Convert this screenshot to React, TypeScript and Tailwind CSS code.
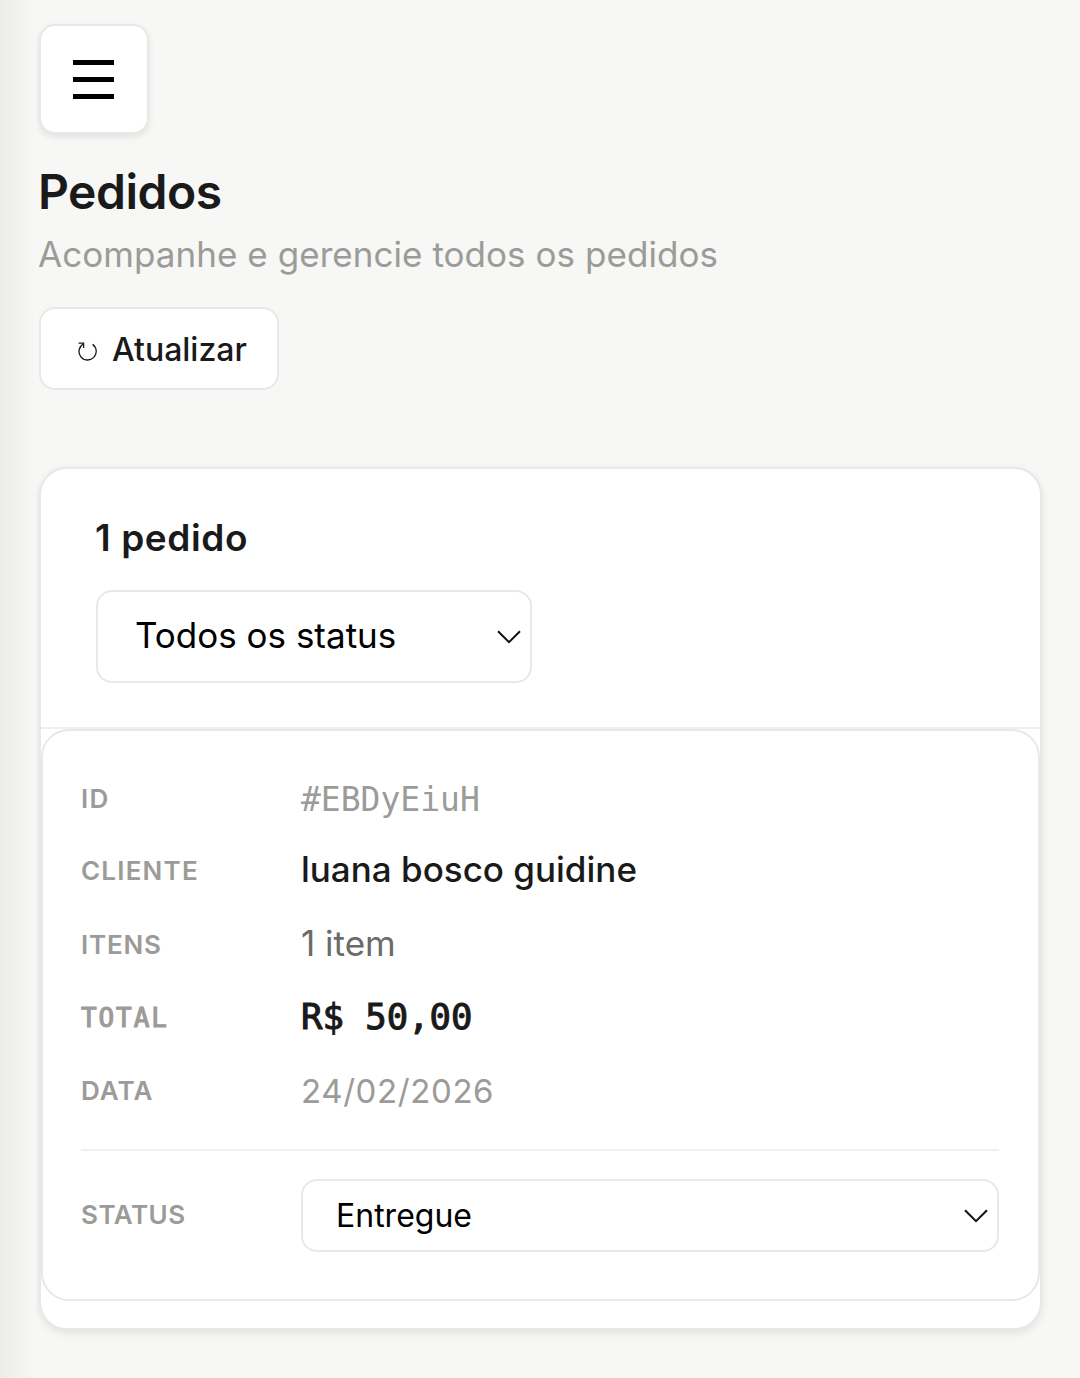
import type { ReactNode } from 'react';

const order = {
  id: '#EBDyEiuH',
  customer: 'luana bosco guidine',
  items: '1 item',
  total: 'R$ 50,00',
  date: '24/02/2026',
  status: 'Entregue',
};

interface RowProps {
  label: string;
  className: string;
  labelClassName: string;
  children: ReactNode;
}

function Chevron() {
  return (
    <svg className="h-[14px] w-6 shrink-0" viewBox="0 0 24 14" fill="none" stroke="#111" strokeWidth="2">
      <path d="M1 1.2 12 12.2 23 1.2" />
    </svg>
  );
}

function RefreshIcon() {
  return (
    <svg className="mt-1 h-5 w-5 shrink-0" viewBox="0 0 20 20" fill="none" stroke="#1a1a1a" strokeWidth="1.3">
      <path d="M5.6 2.8A8.6 8.6 0 1 0 14.6 3.4" />
      <path d="M.6 2.1H5.6V7" />
    </svg>
  );
}

function Row({ label, className, labelClassName, children }: RowProps) {
  return (
    <div className={`flex items-center ${className}`}>
      <span className={`w-[220px] shrink-0 text-[26px] text-[#9b9b98] ${labelClassName}`}>{label}</span>
      {children}
    </div>
  );
}

export default function App() {
  return (
    <div className="relative h-[1378px] w-[1080px] overflow-hidden bg-[#f7f7f5] pt-6 pr-[38px] pl-[39px] font-['Inter','Liberation_Sans',sans-serif] text-[#1a1a1a]">
      {/* sombra do menu lateral fechado */}
      <div className="pointer-events-none absolute inset-y-0 left-0 w-9 bg-linear-to-r from-[#ececea] to-[#f7f7f5]" />

      <button className="flex h-[110px] w-[110px] flex-col items-center justify-center gap-[12px] rounded-2xl border-2 border-[#e8e8e6] bg-white pt-px pr-[2px] shadow-[0_3px_7px_rgba(0,0,0,0.09)]">
        <span className="h-[5px] w-[41px] bg-black" />
        <span className="h-[5px] w-[41px] bg-black" />
        <span className="h-[5px] w-[41px] bg-black" />
      </button>

      <header className="flex flex-col items-start">
        <h1 className="-ml-px mt-[28px] h-[60px] text-[48px] leading-[60px] font-semibold tracking-[-0.5px] whitespace-nowrap">Pedidos</h1>
        <p className="mt-[8px] -ml-px h-[48px] text-[35px] leading-[48px] tracking-[0.05px] whitespace-nowrap text-[#9b9b98]">
          Acompanhe e gerencie todos os pedidos
        </p>
        <button className="mt-[29px] flex h-[83px] w-[240px] items-center gap-[14px] rounded-2xl border-2 border-[#e8e8e6] bg-white pl-[37px] text-[32px] font-medium whitespace-nowrap">
          <RefreshIcon />
          <span className="pt-[2px]">Atualizar</span>
        </button>
      </header>

      <section className="mt-[77px] h-[863px] rounded-[28px] border-2 border-[#e8e8e6] bg-white shadow-[0_3px_8px_rgba(0,0,0,0.09)]">
        <div className="h-[260px] border-b-2 border-[#efefed] px-[55px] pt-[44px]">
          <h2 className="-ml-px h-[50px] text-[37px] leading-[50px] font-semibold tracking-[0.6px] whitespace-nowrap">1 pedido</h2>
          <button className="mt-[27px] flex h-[93px] w-[436px] items-center justify-between rounded-2xl border-2 border-[#e8e8e6] bg-white pr-[9px] pl-[37px] text-[35px] whitespace-nowrap text-black">
            <span className="pb-[2px]">Todos os status</span>
            <Chevron />
          </button>
        </div>

        <article className="h-[572px] rounded-[28px] border-2 border-[#e8e8e6] bg-white pt-[33px] pr-[39px] pl-[38px]">
          <Row label="ID" className="h-[70px]" labelClassName="pb-[2px] font-semibold tracking-[1.4px]">
            <span className="pt-[2px] font-['DejaVu_Sans_Mono',monospace] text-[33px] text-[#9b9b98]">{order.id}</span>
          </Row>
          <Row label="CLIENTE" className="h-[73px]" labelClassName="font-semibold tracking-[1.2px]">
            <span className="pb-[2px] text-[35px] font-medium">{order.customer}</span>
          </Row>
          <Row label="ITENS" className="h-[73px]" labelClassName="pt-[2px] font-semibold tracking-[0.8px]">
            <span className="text-[35px] text-[#6b6b68]">{order.items}</span>
          </Row>
          <Row
            label="TOTAL"
            className="h-[74px]"
            labelClassName="pt-[2px] font-['DejaVu_Sans_Mono',monospace] tracking-[1.9px] [-webkit-text-stroke:1.1px_#9b9b98]"
          >
            <span className="font-['DejaVu_Sans_Mono',monospace] text-[35.6px] [-webkit-text-stroke:1.1px_#1a1a1a]">{order.total}</span>
          </Row>
          <Row label="DATA" className="h-[74px]" labelClassName="pb-[2px] font-semibold tracking-[1.1px]">
            <span className="pt-[2px] text-[33px] tracking-[0.6px] text-[#9b9b98]">{order.date}</span>
          </Row>
          <div className="mt-[21px] border-t-2 border-[#efefed] pt-[28px]">
            <Row label="STATUS" className="h-[73px]" labelClassName="pb-[2px] font-semibold tracking-[0.5px]">
              <button className="flex h-[73px] flex-1 items-center justify-between rounded-2xl border-2 border-[#e8e8e6] bg-white pr-[9px] pl-[33px] text-[32px] text-black">
                <span>{order.status}</span>
                <Chevron />
              </button>
            </Row>
          </div>
        </article>
      </section>
    </div>
  );
}
